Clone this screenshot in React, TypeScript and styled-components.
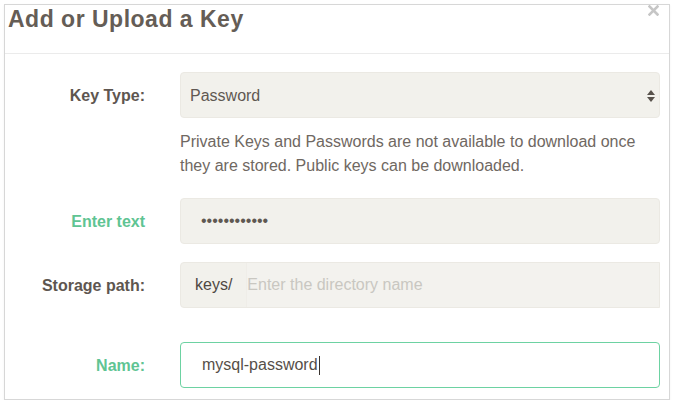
import React from "react";
import styled, { createGlobalStyle } from "styled-components";

const Global = createGlobalStyle`
  html, body { margin: 0; padding: 0; background: #ffffff; }
  body { font-family: "Liberation Sans", Arial, sans-serif; }
  #root { padding: 4px 4px 0 4px; }
`;

const Panel = styled.div`
  position: relative;
  width: 666px;
  box-sizing: border-box;
  border: 1px solid #d7d7d7;
  box-shadow: 0 1px 2px rgba(0, 0, 0, 0.06);
  background: #fff;
`;

const Header = styled.div`
  height: 48px;
  padding: 0 3px;
  border-bottom: 1px solid #ebebeb;
`;

const Title = styled.h2`
  margin: 0;
  font-size: 23px;
  line-height: 28px;
  letter-spacing: 0.5px;
  font-weight: bold;
  color: #655d56;
`;

const Close = styled.button`
  position: absolute;
  top: -1px;
  right: 10px;
  width: 12px;
  height: 12px;
  border: 0;
  background: none;
  padding: 0;
  display: flex;
  align-items: center;
  justify-content: center;
  cursor: pointer;
`;

const Body = styled.div`
  padding: 18px 9px 11px 0;
  display: flex;
  flex-direction: column;
`;

const Group = styled.div<{ $mt?: number }>`
  display: grid;
  grid-template-columns: 140px 1fr;
  column-gap: 35px;
  margin-top: ${(p) => p.$mt ?? 0}px;
`;

const Label = styled.label<{ $accent?: boolean }>`
  height: 46px;
  padding-top: 2px;
  box-sizing: border-box;
  display: flex;
  align-items: center;
  justify-content: flex-end;
  font-size: 16px;
  font-weight: bold;
  color: ${(p) => (p.$accent ? "#5fc493" : "#5e5650")};
`;

const Field = styled.div`
  display: flex;
  flex-direction: column;
`;

const SelectWrap = styled.div`
  position: relative;
`;

const Select = styled.select`
  appearance: none;
  -webkit-appearance: none;
  width: 100%;
  height: 46px;
  box-sizing: border-box;
  border: 1px solid #ebe9e3;
  border-radius: 4px;
  background: #f2f1ec;
  padding: 0 30px 0 9px;
  font-family: "Liberation Sans", Arial, sans-serif;
  font-size: 16px;
  color: #5f5852;
  outline: none;
`;

const Arrows = styled.svg`
  position: absolute;
  right: 5px;
  top: 18px;
  pointer-events: none;
`;

const Help = styled.p`
  margin: 12px 0 0;
  font-size: 16px;
  line-height: 24px;
  color: #6f6862;
`;

const TextInput = styled.input`
  width: 100%;
  height: 46px;
  box-sizing: border-box;
  border: 1px solid #ebe9e3;
  border-radius: 4px;
  background: #f2f1ec;
  padding: 0 20px;
  font-family: "Liberation Sans", Arial, sans-serif;
  font-size: 16px;
  color: #5f5852;
  outline: none;
`;

const InputGroup = styled.div`
  display: flex;
  height: 46px;
  box-sizing: border-box;
  border: 1px solid #ebe9e3;
  border-radius: 4px 0 0 4px;
  background: #f2f1ec;
`;

const Addon = styled.span`
  display: flex;
  align-items: center;
  padding: 0 14px;
  font-size: 16px;
  color: #4f4843;
  border-right: 1px solid #efede8;
`;

const GroupInput = styled.input`
  flex: 1;
  min-width: 0;
  border: 0;
  background: #f3f2ee;
  padding: 0;
  font-family: "Liberation Sans", Arial, sans-serif;
  font-size: 16px;
  color: #5f5852;
  outline: none;
  &::placeholder { color: #c9c7c1; }
`;

const FocusedBox = styled.div`
  height: 46px;
  box-sizing: border-box;
  border: 1px solid #6dd2a2;
  border-radius: 4px;
  background: #fff;
  padding: 0 21px;
  display: flex;
  align-items: center;
  font-size: 16px;
  color: #564f49;
`;

const Caret = styled.span`
  display: inline-block;
  width: 1px;
  height: 19px;
  background: #3a3430;
  margin-left: 1px;
`;

export default function App() {
  return (
    <>
      <Global />
      <Panel>
        <Header>
          <Title>Add or Upload a Key</Title>
        </Header>
        <Close aria-label="Close">
          <svg width="11" height="11" viewBox="0 0 11 11">
            <path
              d="M1.5 1.5 L9.5 9.5 M9.5 1.5 L1.5 9.5"
              stroke="#c6c6c6"
              strokeWidth="2.6"
              strokeLinecap="square"
            />
          </svg>
        </Close>
        <Body>
          <Group>
            <Label>Key Type:</Label>
            <Field>
              <SelectWrap>
                <Select defaultValue="password">
                  <option value="password">Password</option>
                  <option value="private">Private Key</option>
                  <option value="public">Public Key</option>
                </Select>
                <Arrows width="8" height="12" viewBox="0 0 8 12">
                  <path d="M4 0 L8 5 L0 5 Z" fill="#58524c" />
                  <path d="M0 7 L8 7 L4 12 Z" fill="#58524c" />
                </Arrows>
              </SelectWrap>
              <Help>
                Private Keys and Passwords are not available to download once
                they are stored. Public keys can be downloaded.
              </Help>
            </Field>
          </Group>
          <Group $mt={20}>
            <Label $accent>Enter text</Label>
            <Field>
              <TextInput type="password" readOnly value="mysqlpass123" />
            </Field>
          </Group>
          <Group $mt={18}>
            <Label>Storage path:</Label>
            <Field>
              <InputGroup>
                <Addon>keys/</Addon>
                <GroupInput placeholder="Enter the directory name" />
              </InputGroup>
            </Field>
          </Group>
          <Group $mt={34}>
            <Label $accent>Name:</Label>
            <Field>
              <FocusedBox role="textbox">
                mysql-password
                <Caret />
              </FocusedBox>
            </Field>
          </Group>
        </Body>
      </Panel>
    </>
  );
}
